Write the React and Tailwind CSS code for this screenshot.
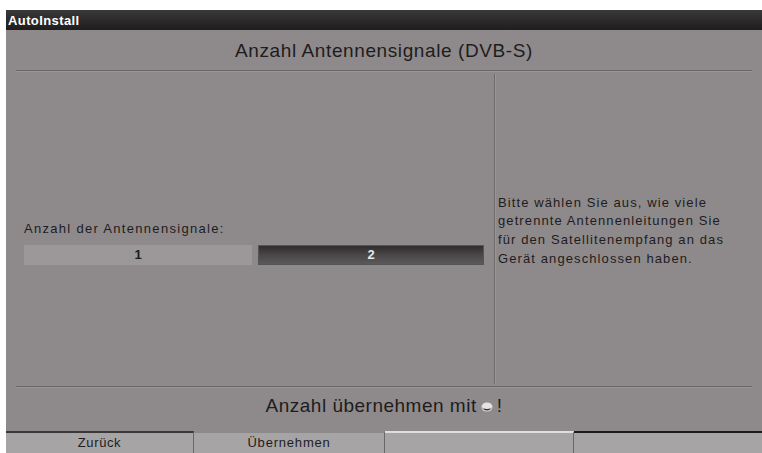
export default function App() {
  const font = { fontFamily: '"Liberation Sans", Arial, sans-serif' };
  return (
    <div className="w-[762px] h-[453px] bg-white pt-[10px] pl-[6px] flex flex-col overflow-hidden" style={font}>
      <div className="h-[20px] bg-gradient-to-b from-[#3a3839] to-[#1f1d1e] flex items-center pl-[2px]">
        <span className="text-white font-bold text-[13px] leading-none tracking-[0.4px]">AutoInstall</span>
      </div>
      <div className="flex-1 bg-[#8e8a8b] flex flex-col">
        <div className="h-[40px] flex items-center justify-center pt-[1px]">
          <span className="text-[19px] text-[#1e1c1d] leading-none tracking-[0.6px]">Anzahl Antennensignale (DVB-S)</span>
        </div>
        <div className="mx-[10px] h-[2px] bg-[#6b6768] border-b border-[#9a9697]" />
        <div className="flex-1 flex">
          <div className="w-[488px] flex flex-col pt-[150px] pl-[18px] pr-[4px]">
            <div className="text-[13px] text-[#1e1c1d] leading-none mb-[10px] tracking-[1.3px]">Anzahl der Antennensignale:</div>
            <div className="flex gap-[6px] h-[20px]">
              <div className="w-[228px] bg-[#9b9899] flex items-center justify-center text-[13px] font-bold text-[#1e1c1d]">1</div>
              <div className="w-[226px] bg-gradient-to-b from-[#2f2d2e] via-[#4a4748] to-[#5c595a] flex items-center justify-center text-[13px] font-bold text-[#e8e8e8] border border-[#555]">2</div>
            </div>
          </div>
          <div className="w-[2px] my-[2px] bg-[#6e6a6b] border-r border-[#9a9697]" />
          <div className="flex-1 flex flex-col justify-center pl-[2px] pr-[2px] pt-[4px]">
            <p className="text-[13px] leading-[18.7px] text-[#1e1c1d] tracking-[1.1px] whitespace-nowrap">
              Bitte wählen Sie aus, wie viele<br />
              getrennte Antennenleitungen Sie<br />
              für den Satellitenempfang an das<br />
              Gerät angeschlossen haben.
            </p>
          </div>
        </div>
        <div className="mx-[10px] h-[2px] bg-[#6b6768] border-b border-[#9a9697]" />
        <div className="h-[43px] flex items-center justify-center pb-[8px]">
          <span className="text-[19px] text-[#1e1c1d] leading-none flex items-center tracking-[0.5px]">
            Anzahl übernehmen mit
            <svg width="12" height="10" viewBox="0 0 12 10" className="mx-[4px] mt-[2px]">
              <ellipse cx="6" cy="5" rx="5.5" ry="4.5" fill="#e4e4e4" />
              <path d="M1 4.5 A5 4 0 0 0 11 4.5 A5 2.5 0 0 1 1 4.5 Z" fill="#333" />
            </svg>
            !
          </span>
        </div>
      </div>
      <div className="h-[22px] flex bg-[#a6a4a5]">
        <div className="w-[188px] border-t-2 border-[#3a3839] border-r border-r-[#6a6869] flex items-center justify-center text-[13px] tracking-[0.6px] text-[#1e1c1d]">Zurück</div>
        <div className="w-[191px] border-t-2 border-[#8c8a8b] border-r border-r-[#6a6869] flex items-center justify-center text-[13px] tracking-[0.8px] text-[#1e1c1d]">Übernehmen</div>
        <div className="w-[189px] border-t-2 border-[#e0dfdf] border-r border-r-[#6a6869]" />
        <div className="flex-1 border-t-2 border-[#1e1c1d]" />
      </div>
    </div>
  );
}
